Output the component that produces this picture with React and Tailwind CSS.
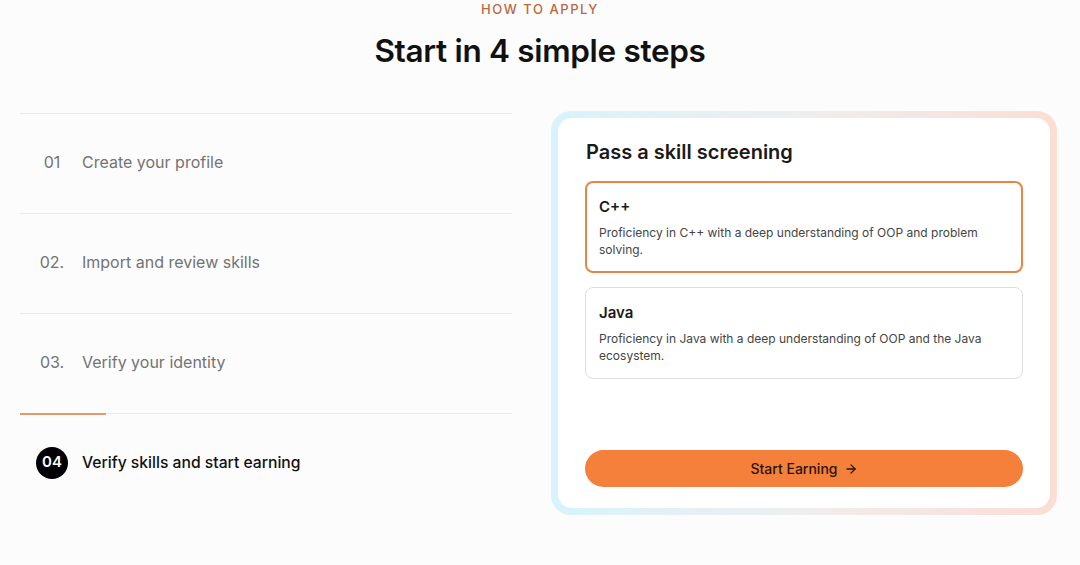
const steps = [
  { num: "01", label: "Create your profile" },
  { num: "02.", label: "Import and review skills" },
  { num: "03.", label: "Verify your identity" },
];

const skills = [
  {
    title: "C++",
    desc: "Proficiency in C++ with a deep understanding of OOP and problem solving.",
    active: true,
  },
  {
    title: "Java",
    desc: "Proficiency in Java with a deep understanding of OOP and the Java ecosystem.",
    active: false,
  },
];

function StepRow({ num, label }) {
  return (
    <div className="h-[100px] border-t border-[#e8e8e8] flex items-center pl-4 pb-[3px]">
      <span className="w-8 text-center text-[16px] text-[#737373]">{num}</span>
      <span className="ml-[14px] text-[16px] text-[#737373]">{label}</span>
    </div>
  );
}

export default function App() {
  return (
    <div
      className="min-h-screen bg-[#fcfcfc] text-[#111]"
      style={{ fontFamily: "Inter, 'Noto Sans', sans-serif" }}
    >
      <div className="text-center text-[13px] leading-[18px] font-medium tracking-[0.12em] text-[#b8683e]">
        HOW TO APPLY
      </div>
      <h1 className="mt-[13px] text-center text-[31.5px] leading-[40px] font-semibold tracking-[-0.01em] text-[#111]">
        Start in 4 simple steps
      </h1>

      <div className="mt-[40px] flex pl-5 gap-[39px]">
        <div className="w-[492px] pt-[2px]">
          {steps.map((s) => (
            <StepRow key={s.num} {...s} />
          ))}
          <div className="relative h-[100px] border-t border-[#e8e8e8] flex items-center pl-4 pb-[2px]">
            <div className="absolute left-0 -top-px h-[2px] w-[86px] bg-[#e39a6a]" />
            <span className="w-8 h-8 rounded-full bg-black text-white flex items-center justify-center text-[15px] font-semibold">
              04
            </span>
            <span className="ml-[14px] text-[15.7px] font-medium text-[#111]">
              Verify skills and start earning
            </span>
          </div>
        </div>

        <div className="w-[506px] h-[404px] p-[7px] rounded-[20px] bg-gradient-to-r from-[#d7f3fc] via-[#eeeeee] to-[#fbded4]">
          <div className="h-full bg-white rounded-[14px] pt-5 pl-[27px] pr-[27px] pb-[21px] flex flex-col">
            <h2 className="ml-px text-[20px] leading-[28px] font-semibold text-[#1a1a1a]">
              Pass a skill screening
            </h2>
            <div className="mt-[15px] flex flex-col gap-[14px]">
              {skills.map((sk) => (
                <div
                  key={sk.title}
                  className={
                    sk.active
                      ? "h-[92px] rounded-lg border-2 border-[#ea8446] px-3 pt-[13px]"
                      : "h-[92px] rounded-lg border border-[#dedede] px-[13px] pt-[14px]"
                  }
                >
                  <div className="text-[15px] leading-[22px] font-semibold text-[#1a1a1a]">
                    {sk.title}
                  </div>
                  <p className="mt-[6px] text-[12px] leading-[17px] text-[#444] pr-6">
                    {sk.desc}
                  </p>
                </div>
              ))}
            </div>
            <button className="mt-auto h-[37px] w-full rounded-full bg-[#f5803b] text-[14px] font-medium text-[#2a1408] flex items-center justify-center gap-1.5">
              Start Earning
              <svg width="14" height="14" viewBox="0 0 24 24" fill="none" stroke="currentColor" strokeWidth="2.2" strokeLinecap="round" strokeLinejoin="round">
                <path d="M5 12h14" />
                <path d="m12 5 7 7-7 7" />
              </svg>
            </button>
          </div>
        </div>
      </div>
    </div>
  );
}
